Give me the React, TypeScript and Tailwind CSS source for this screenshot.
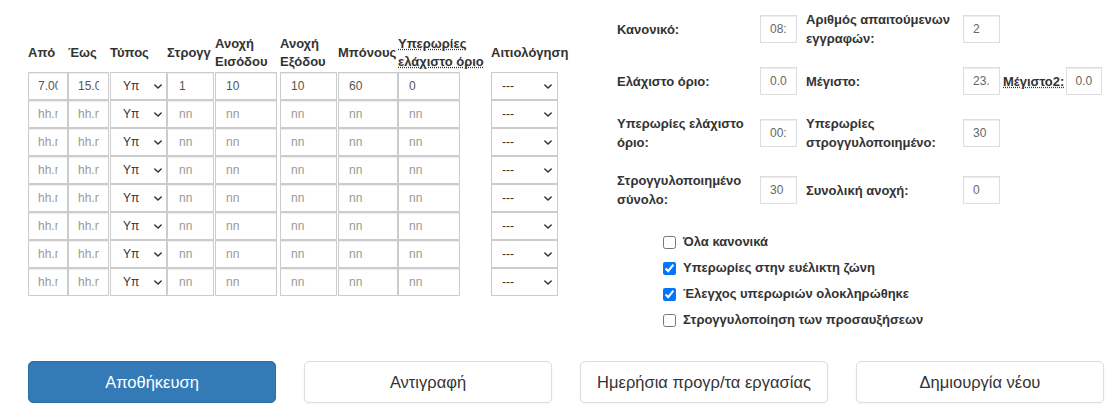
import React from "react";

const inputBase =
  "block h-[28px] border border-[#ccc] bg-white px-[9px] text-[12px] text-[#555] placeholder:text-[#999] shadow-[inset_0_1px_1px_rgba(0,0,0,0.075)] outline-none";

function Chevron({ className }: { className: string }) {
  return (
    <svg
      viewBox="0 0 10 6"
      className={"pointer-events-none absolute top-[12px] h-[5px] w-[8px] " + className}
      fill="none"
      stroke="#333"
      strokeWidth="1.8"
      strokeLinecap="round"
      strokeLinejoin="round"
    >
      <path d="M1 1l4 4 4-4" />
    </svg>
  );
}

function TypeSelect() {
  return (
    <div className="relative w-[57px]">
      <select className="block h-[28px] w-[57px] appearance-none border border-[#ccc] bg-white pl-[12px] text-[12px] text-[#333] outline-none">
        <option>Υπ</option>
      </select>
      <Chevron className="right-[5px]" />
    </div>
  );
}

function ReasonSelect() {
  return (
    <div className="relative w-[67px]">
      <select className="block h-[28px] w-[67px] appearance-none border border-[#ccc] bg-white pl-[10px] text-[12px] text-[#333] outline-none">
        <option>---</option>
      </select>
      <Chevron className="right-[6px]" />
    </div>
  );
}

const rows = [
  { from: "7.00", to: "15.00", round: "1", inTol: "10", outTol: "10", bonus: "60", otMin: "0" },
  ...Array.from({ length: 7 }, () => ({ from: "", to: "", round: "", inTol: "", outTol: "", bonus: "", otMin: "" })),
];

function SmallInput({ value }: { value: string }) {
  return (
    <input
      readOnly
      defaultValue={value}
      className="block h-[28px] w-[37px] border border-[#ddd] bg-white px-[9px] text-[12px] font-normal text-[#666] shadow-[inset_0_1px_1px_rgba(0,0,0,0.075)] outline-none"
    />
  );
}

const checks = [
  { label: "Όλα κανονικά", checked: false },
  { label: "Υπερωρίες στην ευέλικτη ζώνη", checked: true },
  { label: "Έλεγχος υπερωριών ολοκληρώθηκε", checked: true },
  { label: "Στρογγυλοποίηση των προσαυξήσεων", checked: false },
];

export default function App() {
  return (
    <div className="h-[419px] w-[1118px] overflow-hidden bg-white font-['Liberation_Sans',Arial,sans-serif] text-[#333]">
      <div className="flex">
        {/* Shift table */}
        <div className="w-[589px] shrink-0 pl-[28px] pt-[35px]">
          <table className="w-[530px] table-fixed border-separate border-spacing-0">
            <thead>
              <tr className="text-left align-middle text-[13px] font-bold leading-[18px]">
                <th className="w-[40px] pb-[1px]">Από</th>
                <th className="w-[42px] pb-[1px]">Έως</th>
                <th className="w-[57px] pb-[1px]">Τύπος</th>
                <th className="w-[48px] overflow-hidden whitespace-nowrap pb-[1px]">Στρογγ</th>
                <th className="w-[65px] pb-[1px]">
                  Ανοχή
                  <br />
                  Εισόδου
                </th>
                <th className="w-[58px] pb-[1px]">
                  Ανοχή
                  <br />
                  Εξόδου
                </th>
                <th className="w-[60px] whitespace-nowrap pb-[1px]">Μπόνους</th>
                <th className="w-[93px] whitespace-nowrap pb-[1px]">
                  <abbr title="Υπερωρίες ελάχιστο όριο">
                    Υπερωρίες
                    <br />
                    ελάχιστο όριο
                  </abbr>
                </th>
                <th className="w-[67px] whitespace-nowrap pb-[1px]">Αιτιολόγηση</th>
              </tr>
            </thead>
            <tbody>
              {rows.map((r, i) => (
                <tr key={i}>
                  <td className="p-0">
                    <input readOnly defaultValue={r.from} placeholder="hh.mm" className={inputBase + " w-[40px]"} />
                  </td>
                  <td className="p-0">
                    <input readOnly defaultValue={r.to} placeholder="hh.mm" className={inputBase + " w-[41px]"} />
                  </td>
                  <td className="p-0">
                    <TypeSelect />
                  </td>
                  <td className="p-0">
                    <input readOnly defaultValue={r.round} placeholder="nn" className={inputBase + " w-[47px] px-[11px]"} />
                  </td>
                  <td className="p-0">
                    <input readOnly defaultValue={r.inTol} placeholder="nn" className={inputBase + " w-[62px] px-[10px]"} />
                  </td>
                  <td className="p-0">
                    <input readOnly defaultValue={r.outTol} placeholder="nn" className={inputBase + " w-[57px] px-[10px]"} />
                  </td>
                  <td className="p-0">
                    <input readOnly defaultValue={r.bonus} placeholder="nn" className={inputBase + " w-[60px] px-[10px]"} />
                  </td>
                  <td className="p-0">
                    <input readOnly defaultValue={r.otMin} placeholder="nn" className={inputBase + " w-[62px] px-[10px]"} />
                  </td>
                  <td className="p-0">
                    <ReasonSelect />
                  </td>
                </tr>
              ))}
            </tbody>
          </table>
        </div>

        {/* Totals panel */}
        <div className="pl-[28px] pt-[10px]">
          <div className="grid grid-cols-[143px_37px_166px_37px_auto] items-center gap-y-[19px] text-[13px] font-bold leading-[19px]">
            <div className="pr-[4px]">Κανονικό:</div>
            <SmallInput value="08:00" />
            <div className="pl-[9px] pr-[5px]">Αριθμός απαιτούμενων εγγραφών:</div>
            <SmallInput value="2" />
            <div />

            <div className="pr-[4px]">Ελάχιστο όριο:</div>
            <SmallInput value="0.00" />
            <div className="pl-[9px] pr-[5px]">Μέγιστο:</div>
            <SmallInput value="23.59" />
            <div className="flex items-center pl-[3px]">
              <abbr title="Μέγιστο2">Μέγιστο2:</abbr>
              <input
                readOnly
                defaultValue="0.0"
                className="ml-[2px] block h-[28px] w-[36px] border border-[#ddd] bg-white px-[8px] text-[12px] font-normal text-[#666] shadow-[inset_0_1px_1px_rgba(0,0,0,0.075)] outline-none"
              />
            </div>

            <div className="pr-[4px]">Υπερωρίες ελάχιστο όριο:</div>
            <SmallInput value="00:30" />
            <div className="pl-[9px] pr-[5px]">Υπερωρίες στρογγυλοποιημένο:</div>
            <SmallInput value="30" />
            <div />

            <div className="pr-[4px]">Στρογγυλοποιημένο σύνολο:</div>
            <SmallInput value="30" />
            <div className="pl-[9px] pr-[5px]">Συνολική ανοχή:</div>
            <SmallInput value="0" />
            <div />
          </div>

          <div className="mt-[20px] flex flex-col pl-[46px]">
            {checks.map((c) => (
              <label key={c.label} className="flex h-[26px] items-center gap-[7px] text-[13px] font-bold">
                <input type="checkbox" defaultChecked={c.checked} className="h-[13px] w-[13px]" />
                {c.label}
              </label>
            ))}
          </div>
        </div>
      </div>

      {/* Actions */}
      <div className="mt-[28px] flex gap-[28px] pl-[28px]">
        <button className="h-[42px] w-[248px] rounded-[5px] border border-[#2e6da4] bg-[#337ab7] text-[16.5px] text-white">
          Αποθήκευση
        </button>
        <button className="h-[42px] w-[248px] rounded-[5px] border border-[#ddd] bg-white text-[16.5px] text-[#333] shadow-[0_1px_2px_rgba(0,0,0,0.05)]">
          Αντιγραφή
        </button>
        <button className="h-[42px] w-[248px] rounded-[5px] border border-[#ddd] bg-white text-[16.5px] text-[#333] shadow-[0_1px_2px_rgba(0,0,0,0.05)]">
          Ημερήσια προγρ/τα εργασίας
        </button>
        <button className="h-[42px] w-[248px] rounded-[5px] border border-[#ddd] bg-white text-[16.5px] text-[#333] shadow-[0_1px_2px_rgba(0,0,0,0.05)]">
          Δημιουργία νέου
        </button>
      </div>
    </div>
  );
}
